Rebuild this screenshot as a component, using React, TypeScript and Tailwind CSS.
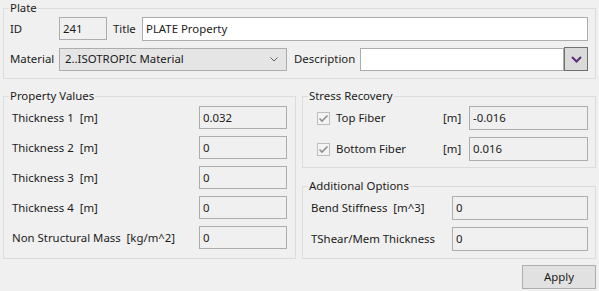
import { ReactNode } from "react";

const FONT = { fontFamily: '"Segoe UI", "Noto Sans", "Open Sans", sans-serif' };

type RowInfo = { label: string; value: string };

const propertyRows: RowInfo[] = [
    { label: "Thickness 1  [m]", value: "0.032" },
    { label: "Thickness 2  [m]", value: "0" },
    { label: "Thickness 3  [m]", value: "0" },
    { label: "Thickness 4  [m]", value: "0" },
    { label: "Non Structural Mass  [kg/m^2]", value: "0" },
];

const fiberRows: RowInfo[] = [
    { label: "Top Fiber", value: "-0.016" },
    { label: "Bottom Fiber", value: "0.016" },
];

const optionRows: RowInfo[] = [
    { label: "Bend Stiffness  [m^3]", value: "0" },
    { label: "TShear/Mem Thickness", value: "0" },
];

function Group({ title, className, children }: { title: string; className: string; children: ReactNode }) {
    return (
        <fieldset className={`border border-[#dcdcdc] px-[6px] ${className}`}>
            <legend className="px-[1px] -ml-[1px] leading-[16px]">{title}</legend>
            {children}
        </fieldset>
    );
}

// read-only text box, grey background like a disabled WinForms field
function ReadBox({ value, className }: { value: string; className: string }) {
    return (
        <div className={`h-[23px] border border-[#adadad] bg-[#f0f0f0] flex items-center px-[3px] whitespace-pre ${className}`}>
            {value}
        </div>
    );
}

function CheckBox() {
    return (
        <div className="w-[13px] h-[13px] border border-[#bcbcbc] bg-[#f4f4f4] flex items-center justify-center">
            <svg width="11" height="11" viewBox="0 0 11 11">
                <path d="M1.5 5.5 L4 8 L9.5 2.5" stroke="#8f8f8f" strokeWidth="1.6" fill="none" />
            </svg>
        </div>
    );
}

export default function App() {
    return (
        <div
            className="w-[599px] h-[291px] bg-[#f0f0f0] text-[11.4px] leading-[16px] text-[#1b1b1b] overflow-hidden"
            style={FONT}
        >
            <Group title="Plate" className="mx-[3px] pt-[1px] pb-[7px]">
                <div className="flex flex-col gap-[7px]">
                    <div className="flex items-center h-[23px]">
                        <span className="w-[49px]">ID</span>
                        <ReadBox value="241" className="w-[48px]" />
                        <span className="w-[29px] ml-[6px]">Title</span>
                        <div className="flex-1 mr-[1px] h-[24px] border border-[#adadad] bg-white flex items-center px-[3px]">
                            PLATE Property
                        </div>
                    </div>
                    <div className="flex items-center h-[24px]">
                        <span className="w-[49px]">Material</span>
                        <div className="w-[228px] h-[23px] border border-[#adadad] bg-[#e5e5e5] flex items-center justify-between pl-[5px] pr-[8px]">
                            <span>2..ISOTROPIC Material</span>
                            <svg width="8" height="5" viewBox="0 0 8 5">
                                <path d="M0.5 0.5 L4 4 L7.5 0.5" stroke="#606060" strokeWidth="1" fill="none" />
                            </svg>
                        </div>
                        <span className="w-[66px] ml-[7px]">Description</span>
                        <div className="w-[204px] h-[23px] border border-[#adadad] bg-white" />
                        <div className="w-[24px] h-[24px] mr-[1px] border border-[#707070] bg-[#dadada] flex items-center justify-center">
                            <svg width="11" height="7" viewBox="0 0 11 7">
                                <path d="M1 1 L5.5 5.5 L10 1" stroke="#5a2c78" strokeWidth="2" fill="none" />
                            </svg>
                        </div>
                    </div>
                </div>
            </Group>

            <div className="flex gap-[6px] mx-[3px] mt-[9px]">
                <Group title="Property Values" className="w-[293px] pt-[2px] pb-[8px]">
                    <div className="flex flex-col gap-[7px]">
                        {propertyRows.map((row) => (
                            <div key={row.label} className="flex items-center justify-between pl-[2px] pr-[2px]">
                                <span className="whitespace-pre">{row.label}</span>
                                <ReadBox value={row.value} className="w-[88px]" />
                            </div>
                        ))}
                    </div>
                </Group>

                <div className="flex flex-col w-[294px] gap-[10px]">
                    <Group title="Stress Recovery" className="pt-[2px] pb-[6px]">
                        <div className="flex flex-col gap-[7px]">
                            {fiberRows.map((row) => (
                                <div key={row.label} className="flex items-center pr-[1px]">
                                    <div className="ml-[8px]">
                                        <CheckBox />
                                    </div>
                                    <span className="ml-[6px] w-[107px]">{row.label}</span>
                                    <span className="w-[26px]">[m]</span>
                                    <ReadBox value={row.value} className="flex-1 h-[24px]" />
                                </div>
                            ))}
                        </div>
                    </Group>
                    <Group title="Additional Options" className="pt-[2px] pb-[7px]">
                        <div className="flex flex-col gap-[7px]">
                            {optionRows.map((row) => (
                                <div key={row.label} className="flex items-center pr-[1px]">
                                    <span className="ml-[2px] w-[141px] whitespace-pre">{row.label}</span>
                                    <ReadBox value={row.value} className="flex-1 h-[24px]" />
                                </div>
                            ))}
                        </div>
                    </Group>
                </div>
            </div>

            <div className="flex justify-end mr-[3px] mt-[6px]">
                <button className="w-[74px] h-[24px] border border-[#adadad] bg-[#e1e1e1] leading-[16px]">Apply</button>
            </div>
        </div>
    );
}
